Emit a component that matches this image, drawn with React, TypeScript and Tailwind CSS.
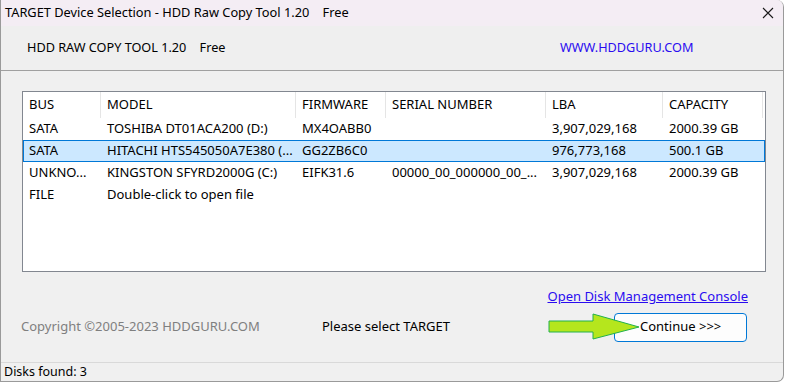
const columns = [
  { label: "BUS", width: "w-[78px]" },
  { label: "MODEL", width: "w-[195px]" },
  { label: "FIRMWARE", width: "w-[90px]" },
  { label: "SERIAL NUMBER", width: "w-[160px]" },
  { label: "LBA", width: "w-[117px]" },
  { label: "CAPACITY", width: "w-[100px]" },
];

const disks = [
  ["SATA", "TOSHIBA DT01ACA200 (D:)", "MX4OABB0", "", "3,907,029,168", "2000.39 GB"],
  ["SATA", "HITACHI HTS545050A7E380 (...", "GG2ZB6C0", "", "976,773,168", "500.1 GB"],
  ["UNKNO...", "KINGSTON SFYRD2000G (C:)", "EIFK31.6", "00000_00_000000_00_...", "3,907,029,168", "2000.39 GB"],
];

const App = () => {
  const selected = 1;

  return (
    <div
      className="w-[786px] h-[383px] bg-white text-[13px] text-black"
      style={{ fontFamily: '"Noto Sans", "Open Sans", sans-serif' }}
    >
      <div className="relative w-[784px] h-[382px] flex flex-col border-l border-r border-b border-[#9a9a9a] rounded-br-[7px] rounded-tr-[7px] bg-[#f0f0f0] overflow-hidden">
        {/* title bar */}
        <div className="h-[26px] flex items-center justify-between bg-[#f4edf4] pl-[4px] pr-[8px] text-[12.8px]">
          <span className="whitespace-pre">TARGET Device Selection - HDD Raw Copy Tool 1.20    Free</span>
          <svg width="12" height="12" viewBox="0 0 12 12" className="mr-[1px]">
            <path d="M1 1 L11 11 M11 1 L1 11" stroke="#1a1a1a" strokeWidth="1.1" />
          </svg>
        </div>

        {/* header */}
        <div className="h-[45px] flex items-center pl-[26px] text-[12.7px] border-b border-[#a0a0a0] bg-[#efefef]">
          <span className="whitespace-pre w-[533px]">HDD RAW COPY TOOL 1.20    Free</span>
          <span className="text-[#2a0cf0]">WWW.HDDGURU.COM</span>
        </div>

        {/* list */}
        <div className="pt-[20px] pl-[21px]">
          <div className="w-[744px] h-[181px] border border-[#828790] bg-white">
            <div className="flex h-[26px] items-center">
              {columns.map((c) => (
                <div key={c.label} className={`${c.width} h-full flex items-center pl-[6px] border-r border-[#e5e5e5]`}>
                  {c.label}
                </div>
              ))}
            </div>
            {disks.map((row, i) => (
              <div
                key={i}
                className={`flex h-[22px] items-center border ${
                  i === selected ? "bg-[#cce8ff] border-[#0078d7]" : "border-transparent"
                }`}
              >
                {row.map((cell, j) => (
                  <div key={j} className={`${columns[j].width} pl-[5px] whitespace-nowrap overflow-hidden`}>
                    {cell}
                  </div>
                ))}
              </div>
            ))}
            <div className="flex h-[22px] items-center border border-transparent">
              <div className="w-[78px] pl-[5px]">FILE</div>
              <div className="pl-[5px]">Double-click to open file</div>
            </div>
          </div>
        </div>

        {/* footer */}
        <div className="relative flex-1 flex flex-col">
          <div className="flex justify-end pr-[35px] pt-[15px]">
            <a href="#" className="text-[#2a0cf0] underline">
              Open Disk Management Console
            </a>
          </div>
          <div className="flex items-center mt-[6px] h-[29px]">
            <span className="w-[321px] pl-[20px] text-[#7f7f7f]">Copyright ©2005-2023 HDDGURU.COM</span>
            <span className="w-[292px]">Please select TARGET</span>
            <button className="w-[133px] h-[29px] border border-[#0078d7] rounded-[4px] bg-[#fdfdfd] flex items-center pl-[25px]">
              Continue &gt;&gt;&gt;
            </button>
          </div>
          <svg className="absolute left-[547px] top-[41px]" width="93" height="27" viewBox="0 0 93 27">
            <polygon
              points="1,8 45,8 45,1 91,14 45,26 45,19 1,19"
              fill="#b5e61d"
              stroke="#22b14c"
              strokeWidth="1"
            />
          </svg>
        </div>

        {/* status bar */}
        <div className="h-[19px] border-t border-[#d9d9d9] flex items-center pl-[3px] text-[12.5px]">Disks found: 3</div>
      </div>
    </div>
  );
};

export default App;
